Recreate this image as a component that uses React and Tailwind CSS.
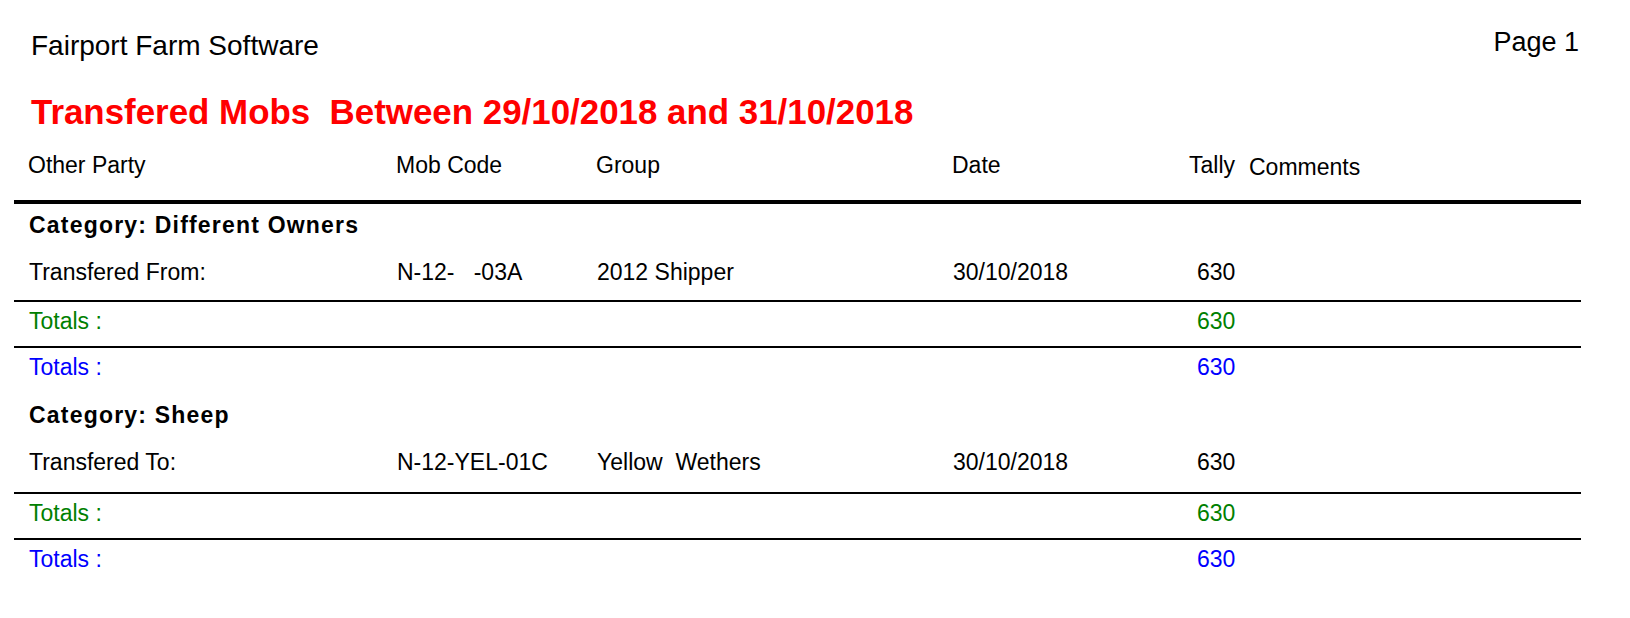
import React from 'react'

const cols = 'grid grid-cols-[368px_200px_356px_236px_61px_1fr]'

const groups = [
    {
        category: 'Category: Different Owners',
        label: 'Transfered From:',
        mob: 'N-12-   -03A',
        group: '2012 Shipper',
        date: '30/10/2018',
        tally: '630',
        gap: 'mt-[21px]',
        lineGap: 'mt-[15px]',
        catGap: 'mt-[8px]',
    },
    {
        category: 'Category: Sheep',
        label: 'Transfered To:',
        mob: 'N-12-YEL-01C',
        group: 'Yellow  Wethers',
        date: '30/10/2018',
        tally: '630',
        gap: 'mt-[21px]',
        lineGap: 'mt-[17px]',
        catGap: 'mt-[22px]',
    },
]

const Rule = ({ className }) => <div className={`h-[2px] bg-black ${className}`} />

const TotalsRow = ({ color, value, className }) => (
    <div className={`${cols} pl-[15px] h-[26px] leading-[26px] ${color} ${className}`}>
        <div className="whitespace-pre">Totals :</div>
        <div />
        <div />
        <div />
        <div className="pl-[8px]">{value}</div>
    </div>
)

export default function App() {
    return (
        <div
            className="w-[1630px] h-[618px] bg-white text-black overflow-hidden"
            style={{ fontFamily: '"Liberation Sans", Arial, sans-serif' }}
        >
            <div className="ml-[14px] w-[1567px]">
                {/* page header */}
                <div className="flex justify-between items-start pt-[27px] leading-[30px]">
                    <div className="pl-[17px] pt-[4px] text-[28px]">Fairport Farm Software</div>
                    <div className="pr-[2px] text-[27px]">Page 1</div>
                </div>

                <div className="mt-[31px] pl-[17px] text-[34.9px] leading-[40px] font-bold text-[#ff0000] whitespace-pre">
                    Transfered Mobs  Between 29/10/2018 and 31/10/2018
                </div>

                {/* column headings */}
                <div className={`${cols} mt-[20px] pl-[14px] h-[26px] text-[23px] leading-[26px]`}>
                    <div>Other Party</div>
                    <div>Mob Code</div>
                    <div>Group</div>
                    <div>Date</div>
                    <div className="pl-[1px]">Tally</div>
                    <div className="translate-y-[2px]">Comments</div>
                </div>
                <div className="mt-[22px] h-[4px] bg-black" />

                <div className="text-[23px]">
                    {groups.map(g => (
                        <div key={g.category}>
                            <div className={`${g.catGap} pl-[15px] h-[26px] leading-[26px] font-bold tracking-[1.2px]`}>
                                {g.category}
                            </div>
                            <div className={`${cols} ${g.gap} pl-[15px] h-[26px] leading-[26px]`}>
                                <div>{g.label}</div>
                                <div className="whitespace-pre">{g.mob}</div>
                                <div className="whitespace-pre">{g.group}</div>
                                <div>{g.date}</div>
                                <div className="pl-[8px]">{g.tally}</div>
                            </div>
                            <Rule className={g.lineGap} />
                            <TotalsRow color="text-[#008000]" value={g.tally} className="mt-[6px]" />
                            <Rule className="mt-[12px]" />
                            <TotalsRow color="text-[#0000ff]" value={g.tally} className="mt-[6px]" />
                        </div>
                    ))}
                </div>
            </div>
        </div>
    )
}
